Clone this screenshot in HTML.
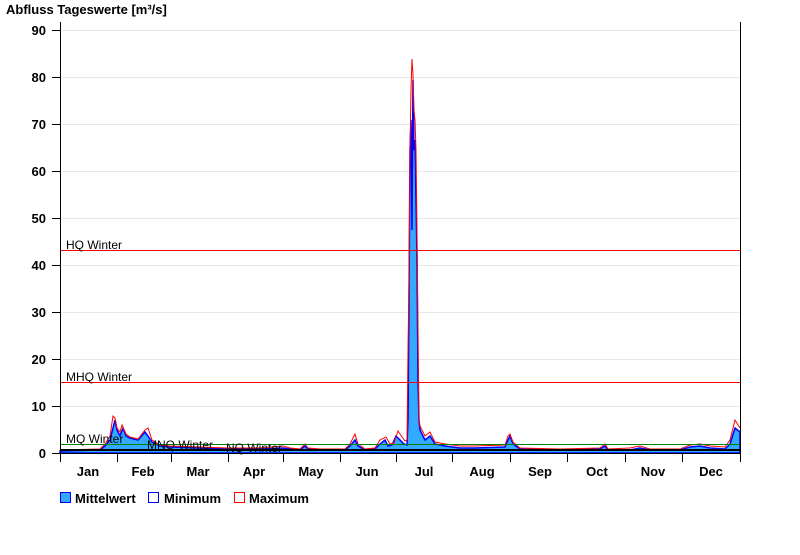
<!DOCTYPE html>
<html><head><meta charset="utf-8"><style>
body{margin:0;background:#fff;width:800px;height:550px;overflow:hidden;font-family:"Liberation Sans",Arial,sans-serif}
</style></head><body>
<svg width="800" height="550" xmlns="http://www.w3.org/2000/svg" font-family="Liberation Sans, Arial, sans-serif">
<text x="6" y="14" font-size="13" font-weight="bold" fill="#000">Abfluss Tageswerte [m³/s]</text>
<g stroke="#e8e8e8" stroke-width="1">
<line x1="60" y1="30.5" x2="740" y2="30.5"/><line x1="60" y1="77.5" x2="740" y2="77.5"/>
<line x1="60" y1="124.5" x2="740" y2="124.5"/><line x1="60" y1="171.5" x2="740" y2="171.5"/>
<line x1="60" y1="218.5" x2="740" y2="218.5"/><line x1="60" y1="265.5" x2="740" y2="265.5"/>
<line x1="60" y1="312.5" x2="740" y2="312.5"/><line x1="60" y1="359.5" x2="740" y2="359.5"/>
<line x1="60" y1="406.5" x2="740" y2="406.5"/>
</g>
<g font-size="13" font-weight="bold" text-anchor="end" fill="#000">
<text x="46" y="35">90</text><text x="46" y="82">80</text><text x="46" y="129">70</text>
<text x="46" y="176">60</text><text x="46" y="223">50</text><text x="46" y="270">40</text>
<text x="46" y="317">30</text><text x="46" y="364">20</text><text x="46" y="411">10</text>
<text x="46" y="458">0</text>
</g>
<g stroke="#000" stroke-width="1">
<line x1="52" y1="30.5" x2="60" y2="30.5"/><line x1="52" y1="77.5" x2="60" y2="77.5"/>
<line x1="52" y1="124.5" x2="60" y2="124.5"/><line x1="52" y1="171.5" x2="60" y2="171.5"/>
<line x1="52" y1="218.5" x2="60" y2="218.5"/><line x1="52" y1="265.5" x2="60" y2="265.5"/>
<line x1="52" y1="312.5" x2="60" y2="312.5"/><line x1="52" y1="359.5" x2="60" y2="359.5"/>
<line x1="52" y1="406.5" x2="60" y2="406.5"/><line x1="52" y1="453.5" x2="60" y2="453.5"/>
</g>
<polygon fill="#33aaff" stroke="#0000ff" stroke-width="1.5" points="60,451 100,450 105,446 110,440 113,428 115,420 117,430 120,436 123,428 126,436 130,438 138,440 145,432 148,436 152,442 160,446 170,447 200,448 228,449 260,449 283,448 290,449 300,450 305,446 308,449 320,450 345,450 350,446 355,440 358,446 365,450 375,449 380,444 385,440 388,446 392,445 396,436 400,440 404,444 407,445 408,420 409,300 410,150 411,120 412,230 413,80 414,150 415,140 416,200 417,260 418,380 419,420 420,430 425,440 430,436 435,444 445,446 460,448 475,448 505,447 508,440 510,436 513,444 520,449 560,450 600,449 605,446 608,450 630,450 640,448 650,450 680,450 690,447 700,446 710,448 725,449 730,444 735,428 740,432 740,453 60,453"/>
<polyline fill="none" stroke="#ff0000" stroke-width="1" points="60,450 100,449 105,444 110,436 113,416 115,418 117,428 120,432 122,425 126,434 130,437 138,439 145,430 148,428 152,440 160,445 170,446 200,447 228,448 260,448 283,446 290,448 300,449 305,444 308,448 320,449 345,449 350,444 355,434 358,444 365,449 375,448 380,440 386,437 390,444 394,443 398,431 402,437 405,441 407,440 408,350 409,280 410,150 411,90 412,59 413,75 414,110 415,120 416,150 417,230 418,330 419,420 420,426 425,436 430,432 435,442 445,444 460,446 475,446 505,445 508,436 510,434 513,442 520,448 560,449 600,448 605,444 608,449 630,448 640,446 650,449 680,449 690,445 700,444 710,446 725,447 730,440 735,420 740,428"/>
<line x1="60" y1="250.5" x2="740" y2="250.5" stroke="#ff0000" stroke-width="1"/>
<line x1="60" y1="382.5" x2="740" y2="382.5" stroke="#ff0000" stroke-width="1"/>
<line x1="60" y1="444.5" x2="740" y2="444.5" stroke="#008000" stroke-width="1"/>
<line x1="60" y1="450" x2="740" y2="450" stroke="#000" stroke-width="2"/>
<g font-size="12" fill="#000">
<text x="66" y="249">HQ Winter</text>
<text x="66" y="381">MHQ Winter</text>
<text x="66" y="443">MQ Winter</text>
<text x="147" y="449">MNQ Winter</text>
<text x="226" y="452">NQ Winter</text>
</g>
<line x1="60.5" y1="22" x2="60.5" y2="462" stroke="#000"/>
<line x1="740.5" y1="22" x2="740.5" y2="453" stroke="#000"/>
<line x1="60" y1="453.5" x2="740" y2="453.5" stroke="#000"/>
<g stroke="#000">
<line x1="117.5" y1="453" x2="117.5" y2="462"/><line x1="171.5" y1="453" x2="171.5" y2="462"/>
<line x1="228.5" y1="453" x2="228.5" y2="462"/><line x1="283.5" y1="453" x2="283.5" y2="462"/>
<line x1="340.5" y1="453" x2="340.5" y2="462"/><line x1="396.5" y1="453" x2="396.5" y2="462"/>
<line x1="452.5" y1="453" x2="452.5" y2="462"/><line x1="510.5" y1="453" x2="510.5" y2="462"/>
<line x1="567.5" y1="453" x2="567.5" y2="462"/><line x1="625.5" y1="453" x2="625.5" y2="462"/>
<line x1="682.5" y1="453" x2="682.5" y2="462"/><line x1="740.5" y1="453" x2="740.5" y2="462"/>
</g>
<g font-size="13" font-weight="bold" text-anchor="middle" fill="#000">
<text x="88" y="476">Jan</text><text x="143" y="476">Feb</text><text x="198" y="476">Mar</text>
<text x="254" y="476">Apr</text><text x="311" y="476">May</text><text x="367" y="476">Jun</text>
<text x="424" y="476">Jul</text><text x="482" y="476">Aug</text><text x="540" y="476">Sep</text>
<text x="597" y="476">Oct</text><text x="653" y="476">Nov</text><text x="711" y="476">Dec</text>
</g>
<rect x="60.5" y="492.5" width="10" height="10" fill="#33aaff" stroke="#0000ff"/>
<rect x="148.5" y="492.5" width="10" height="10" fill="#fff" stroke="#0000ff"/>
<rect x="234.5" y="492.5" width="10" height="10" fill="#fff" stroke="#ff0000"/>
<g font-size="13" font-weight="bold" fill="#000">
<text x="75" y="503">Mittelwert</text><text x="164" y="503">Minimum</text><text x="249" y="503">Maximum</text>
</g>
</svg>
</body></html>
